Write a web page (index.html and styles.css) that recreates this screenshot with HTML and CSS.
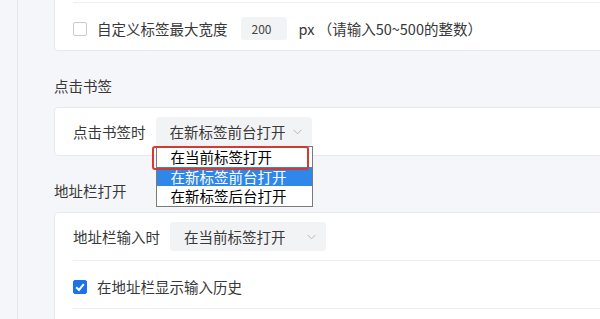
FILE: index.html
```html
<!DOCTYPE html>
<html lang="zh-CN">
	<head>
		<meta charset="UTF-8">
		<meta name="viewport" content="width=device-width, initial-scale=1">
		<title>设置</title>
		<link rel="stylesheet" href="styles.css">
	</head>
	<body>
		<div class="layout">
			<div class="side"></div>
			<div class="main">

				<div class="card">
					<div class="row"></div>
					<div class="row check-row">
						<span class="box"></span>
						<span class="text">自定义标签最大宽度</span>
						<span class="num-input">200</span>
						<span class="text">px （请输入50~500的整数）</span>
					</div>
				</div>

				<h3 class="title">点击书签</h3>
				<div class="card">
					<div class="row">
						<span class="label">点击书签时</span>
						<div class="select">
							<span>在新标签前台打开</span>
							<svg class="chev" width="9" height="6" viewBox="0 0 9 6"><path d="M0.5 0.8 L4.5 4.8 L8.5 0.8" fill="none" stroke="#b3b7bd" stroke-width="1"/></svg>

							<ul class="dropdown">
								<li>在当前标签打开</li>
								<li class="active">在新标签前台打开</li>
								<li>在新标签后台打开</li>
							</ul>
							<div class="mark"></div>
						</div>
					</div>
				</div>

				<h3 class="title">地址栏打开</h3>
				<div class="card">
					<div class="row">
						<span class="label">地址栏输入时</span>
						<div class="select">
							<span>在当前标签打开</span>
							<svg class="chev" width="9" height="6" viewBox="0 0 9 6"><path d="M0.5 0.8 L4.5 4.8 L8.5 0.8" fill="none" stroke="#b3b7bd" stroke-width="1"/></svg>
						</div>
					</div>
					<div class="row check-row">
						<span class="box checked">
							<svg width="14" height="14" viewBox="0 0 14 14"><path d="M3.2 7.2 L6 10 L10.8 4.2" fill="none" stroke="#fff" stroke-width="2"/></svg>
						</span>
						<span class="text">在地址栏显示输入历史</span>
					</div>
					<div class="row"></div>
				</div>

			</div>
		</div>
	</body>
</html>
```

FILE: styles.css
```css
*{
	margin: 0;
	padding: 0;
	box-sizing: border-box;
}
body{
	background: #f5f6f9;
	overflow: hidden;
	font-family: "Noto Sans CJK SC", "Noto Sans", sans-serif;
	font-size: 14.5px;
	color: #383838;
}
.layout{
	display: flex;
	height: 100vh;
}
.side{
	width: 18px;
	flex: none;
	border-right: 1px solid #e4e6ea;
}
.main{
	padding-left: 36px;
	margin-top: -46px;
}
.card{
	width: 620px;
	background: #fff;
	border: 1px solid #e6e8ec;
	border-radius: 4px;
}
.row{
	display: flex;
	align-items: center;
	height: 47px;
	margin-left: 18px;
}
.row + .row{
	height: 48px;
	border-top: 1px solid #eceef1;
}
.check-row{
	padding-top: 4px;
}
.title{
	font-size: 14.5px;
	font-weight: normal;
	line-height: 20px;
	margin: 25px 0 11px;
	color: #383838;
}
.box{
	width: 14px;
	height: 14px;
	border: 1px solid #c8ccd2;
	border-radius: 2px;
	margin-right: 10px;
	background: #fff;
	display: flex;
}
.box.checked{
	background: #1a73e8;
	border-color: #1a73e8;
}
.box svg{
	margin: -1px;
}
.num-input{
	width: 46px;
	height: 23px;
	margin: 0 12px 0 13px;
	padding-left: 11px;
	background: #f2f3f5;
	border-radius: 3px;
	font-size: 12px;
	line-height: 23px;
	color: #444;
}
.label{
	margin-right: 10px;
}
.select{
	position: relative;
	width: 156px;
	height: 29px;
	padding-left: 14px;
	background: #f2f3f5;
	border-radius: 4px;
	display: flex;
	align-items: center;
}
.chev{
	position: absolute;
	right: 10px;
	top: 12px;
}
.dropdown{
	position: absolute;
	left: 0;
	top: 29px;
	width: 157px;
	list-style: none;
	background: #fff;
	border: 1px solid #7a7a7a;
	z-index: 2;
}
.dropdown li{
	height: 19.5px;
	line-height: 19px;
	padding-left: 14px;
	color: #000;
}
.dropdown li.active{
	background: #2f87ea;
	color: #fff;
}
.mark{
	position: absolute;
	left: -4px;
	top: 29px;
	width: 157px;
	height: 24px;
	border: 2px solid #d33a31;
	border-radius: 3px;
	z-index: 3;
}
```
